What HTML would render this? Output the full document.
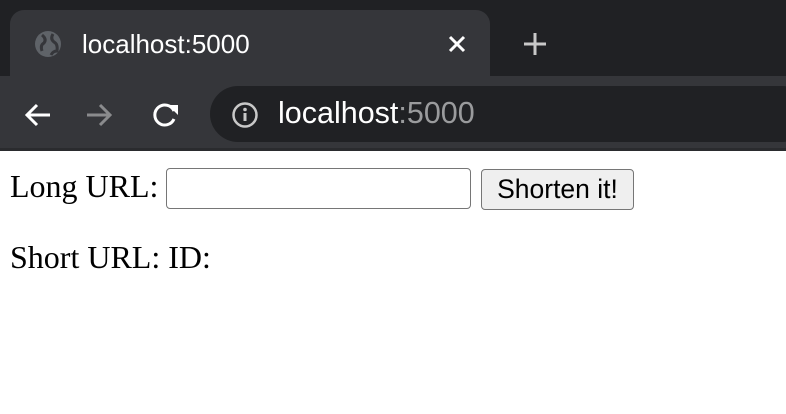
<!DOCTYPE html>
<html><head><style>
body{margin:0;width:786px;height:414px;overflow:hidden;background:#fff;position:relative;font-family:"Liberation Sans",sans-serif}
.top{position:absolute;left:0;top:0;width:786px;height:78px;background:#202124}
.tab{position:absolute;left:10px;top:10px;width:480px;height:68px;background:#35363a;border-radius:14px 14px 0 0}
.tb{position:absolute;left:0;top:76px;width:786px;height:73px;background:#35363a}
.line{position:absolute;left:0;top:148px;width:786px;height:3px;background:#2a2b2e}
.omni{position:absolute;left:210px;top:86px;width:600px;height:56px;background:#202124;border-radius:28px}
.t{position:absolute;color:#fff;font-size:26px;white-space:nowrap}
.c{position:absolute;font-family:"Liberation Serif",serif;font-size:32px;color:#000;white-space:nowrap}
.inp{position:absolute;left:166px;top:168px;width:303px;height:39px;border:1px solid #767676;border-radius:4px;box-sizing:content-box}
.btn{position:absolute;left:481px;top:169px;width:151px;height:39px;border:1px solid #767676;border-radius:4px;background:#efefef;font-size:26.5px;text-align:center;line-height:39px}
</style></head><body>
<div class="top"></div><div class="tab"></div><div class="tb"></div><div class="omni"></div><div class="line"></div>
<svg style="position:absolute;left:33px;top:29px" width="30" height="30" viewBox="0 0 30 30"><circle cx="15" cy="15" r="13" fill="#5f6368"/><path d="M9 6 Q14 10 11 14 Q7 16 9 22 M20 5 Q17 10 21 13 Q25 15 24 22 Q20 22 18 26" stroke="#35363a" stroke-width="3" fill="none"/></svg>
<div class="t" style="left:82px;top:29px">localhost:5000</div>
<svg style="position:absolute;left:447px;top:34px" width="20" height="20"><path d="M3 3L17 17M17 3L3 17" stroke="#fff" stroke-width="3"/></svg>
<svg style="position:absolute;left:522px;top:31px" width="26" height="26"><path d="M13 2V24M2 13H24" stroke="#c8c8c8" stroke-width="3"/></svg>
<svg style="position:absolute;left:22px;top:100px" width="32" height="30"><path d="M28 15H5M15 5L5 15L15 25" stroke="#fff" stroke-width="3" fill="none"/></svg>
<svg style="position:absolute;left:84px;top:100px" width="32" height="30"><path d="M3 15H26M16 5L26 15L16 25" stroke="#8a8b8d" stroke-width="3" fill="none"/></svg>
<svg style="position:absolute;left:150px;top:99px" width="32" height="32"><path d="M24 12A10 10 0 1 0 24 20" stroke="#fff" stroke-width="3" fill="none"/><path d="M18 6H28V16Z" fill="#fff"/></svg>
<svg style="position:absolute;left:231px;top:101px" width="28" height="28"><circle cx="14" cy="14" r="11.5" stroke="#c8c8c8" stroke-width="2.5" fill="none"/><path d="M14 12V20" stroke="#c8c8c8" stroke-width="3"/><circle cx="14" cy="8.5" r="1.8" fill="#c8c8c8"/></svg>
<div class="t" style="left:278px;top:96px;font-size:30.5px">localhost<span style="color:#9a9b9d">:5000</span></div>
<div class="c" style="left:10px;top:168px">Long URL:</div>
<div class="inp"></div>
<div class="btn">Shorten it!</div>
<div class="c" style="left:10px;top:239px">Short URL: ID:</div>
</body></html>
